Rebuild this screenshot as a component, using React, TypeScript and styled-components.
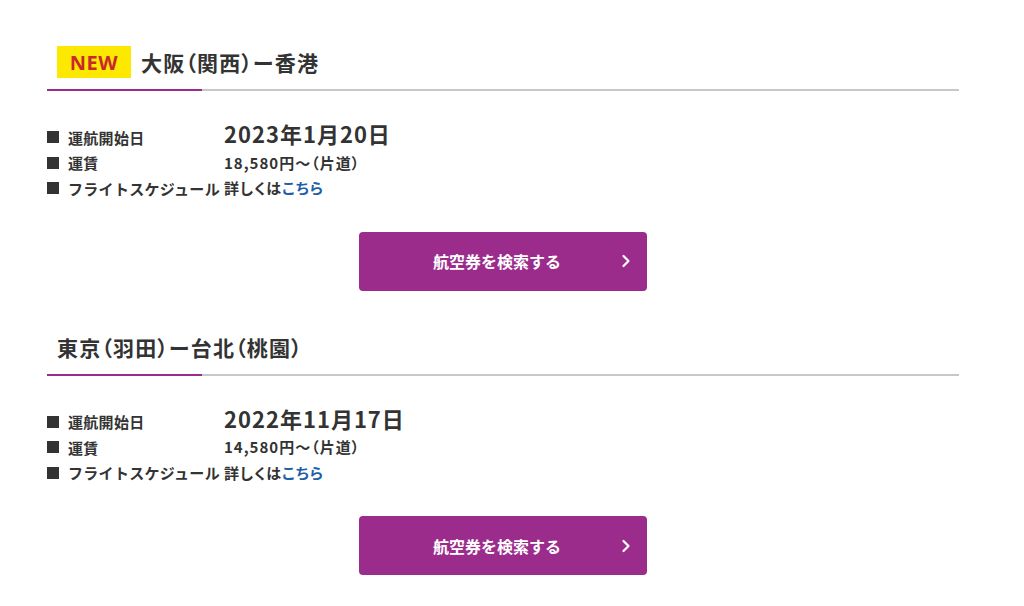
import styled, { createGlobalStyle } from 'styled-components';

const GlobalStyle = createGlobalStyle`
  body {
    margin: 0;
    background: #fff;
    font-family: "Noto Sans CJK JP", "Noto Sans", sans-serif;
    color: #333;
  }
`;

const S_Page = styled.div`
  width: 912px;
  padding: 46px 0 0 47px;
  display: flex;
  flex-direction: column;
  gap: 40px;
`;

const S_Section = styled.section`
  display: flex;
  flex-direction: column;
`;

const S_Heading = styled.h2`
  margin: 0;
  height: 32px;
  padding: 0 0 11px 10px;
  display: flex;
  align-items: center;
  gap: 10px;
  font-size: 21px;
  font-weight: 700;
  font-feature-settings: 'palt';
  color: #333;
  letter-spacing: 1.2px;
  border-bottom: 2px solid #c8c8c8;
  position: relative;

  &::after {
    content: '';
    position: absolute;
    left: 0;
    bottom: -2px;
    width: 155px;
    height: 2px;
    background: #9b2c8c;
  }
`;

const S_NewBadge = styled.span`
  height: 32px;
  width: 74px;
  display: flex;
  align-items: center;
  justify-content: center;
  background: #fde800;
  color: #c8282e;
  font-family: "Noto Sans", sans-serif;
  font-size: 20px;
  letter-spacing: 0.5px;
  font-weight: 700;
`;

const S_List = styled.dl`
  margin: 30px 0 0 0;
  display: grid;
  grid-template-columns: 177px 1fr;
  align-items: baseline;
  row-gap: 0;
`;

const S_Label = styled.dt`
  display: flex;
  align-items: center;
  gap: 9px;
  font-size: 15px;
  font-weight: 700;
  line-height: 25px;
  letter-spacing: 0.3px;
  color: #333;
  white-space: nowrap;

  &::before {
    content: '';
    width: 12px;
    height: 12px;
    background: #333;
    flex-shrink: 0;
  }
`;

const S_Value = styled.dd<{ $big?: boolean }>`
  margin: 0;
  font-size: ${(p) => (p.$big ? '22px' : '15px')};
  font-weight: 700;
  line-height: ${(p) => (p.$big ? '24px' : '25px')};
  letter-spacing: 1px;
  font-feature-settings: 'palt';
  color: #333;
`;

const S_Link = styled.a`
  color: #1f5fa8;
  text-decoration: none;
`;

const S_ButtonRow = styled.div`
  margin-top: 31px;
  display: flex;
  padding-left: 312px;
`;

const S_SearchButton = styled.button`
  width: 288px;
  height: 59px;
  padding: 0 12px 0 0;
  border: none;
  border-radius: 4px;
  background: #9b2c8c;
  color: #fff;
  font-family: inherit;
  font-size: 16px;
  font-weight: 700;
  position: relative;
  cursor: pointer;

  & > svg {
    position: absolute;
    right: 15px;
    top: 50%;
    transform: translateY(-50%);
  }
`;

interface Route {
  isNew?: boolean;
  title: string;
  start: string;
  fare: string;
}

const routes: Route[] = [
  { isNew: true, title: '大阪（関西）ー香港', start: '2023年1月20日', fare: '18,580円～（片道）' },
  { title: '東京（羽田）ー台北（桃園）', start: '2022年11月17日', fare: '14,580円～（片道）' },
];

function Chevron() {
  return (
    <svg width='12' height='14' viewBox='0 0 12 14' fill='none'>
      <path d='M3.5 2 L8.5 7 L3.5 12' stroke='#fff' strokeWidth='2.2' strokeLinecap='round' strokeLinejoin='round' />
    </svg>
  );
}

function RouteSection({ route }: { route: Route }) {
  return (
    <S_Section>
      <S_Heading>
        {route.isNew && <S_NewBadge>NEW</S_NewBadge>}
        {route.title}
      </S_Heading>
      <S_List>
        <S_Label>運航開始日</S_Label>
        <S_Value $big>{route.start}</S_Value>
        <S_Label>運賃</S_Label>
        <S_Value>{route.fare}</S_Value>
        <S_Label>フライトスケジュール</S_Label>
        <S_Value>
          詳しくは<S_Link href='#'>こちら</S_Link>
        </S_Value>
      </S_List>
      <S_ButtonRow>
        <S_SearchButton>
          航空券を検索する
          <Chevron />
        </S_SearchButton>
      </S_ButtonRow>
    </S_Section>
  );
}

function App() {
  return (
    <>
      <GlobalStyle />
      <S_Page>
        {routes.map((r) => (
          <RouteSection key={r.title} route={r} />
        ))}
      </S_Page>
    </>
  );
}

export default App;
